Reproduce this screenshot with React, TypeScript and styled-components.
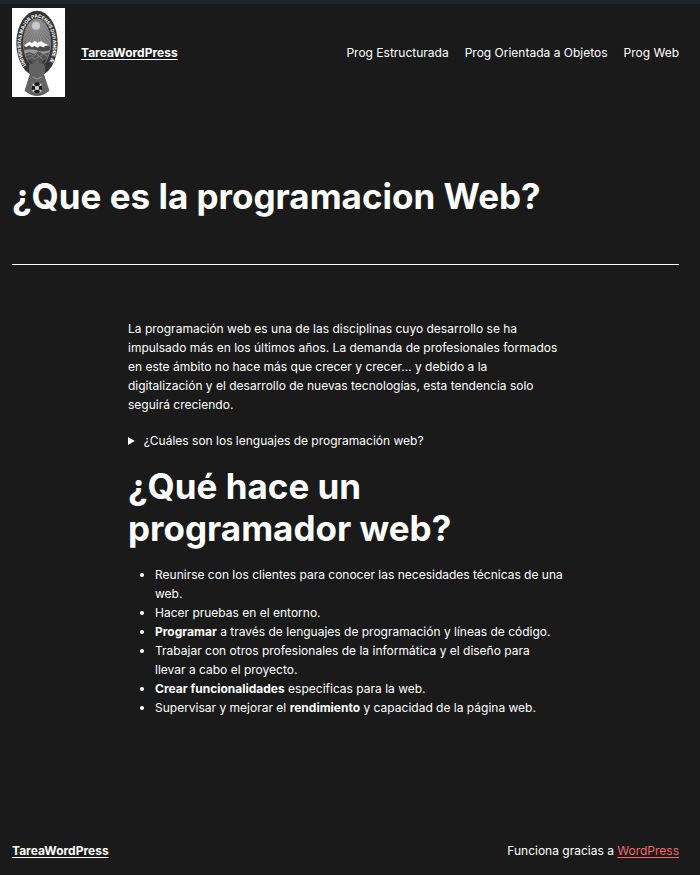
import React from "react";
import styled, { createGlobalStyle } from "styled-components";

const GlobalStyle = createGlobalStyle`
  *, *::before, *::after { box-sizing: border-box; }
  body {
    margin: 0;
    background: #1a1a1a;
    color: #fff;
    font: 400 12px/19px Inter, "Liberation Sans", sans-serif;
  }
`;

const Page = styled.div`
  border-top: 4px solid #1d252c;
  padding: 4px 21px 0 12px;
`;

const Header = styled.header`
  display: flex;
  align-items: center;
  justify-content: space-between;
  gap: 16px;
`;

const Brand = styled.div`
  display: flex;
  align-items: center;
  gap: 16px;
`;

const LogoLink = styled.a`
  display: block;
  line-height: 0;
`;

const SiteTitle = styled.a`
  color: #fff;
  font-weight: 700;
  text-underline-offset: 2px;
`;

const Nav = styled.nav`
  display: flex;
  gap: 16px;
`;

const NavLink = styled.a`
  color: #fff;
  text-decoration: none;
`;

const Title = styled.h1`
  margin: 78px 0 46px;
  font-size: 35px;
  line-height: 43px;
  font-weight: 700;
`;

const Rule = styled.hr`
  margin: 0;
  border: 0;
  border-top: 1px solid #fff;
`;

const Article = styled.article`
  max-width: 435px;
  margin: 54px auto 0;
`;

const Paragraph = styled.p`
  margin: 0 0 17px;
`;

const Details = styled.details`
  margin: 0 0 15px;
`;

const Summary = styled.summary`
  & > span { padding-left: 3px; }
`;

const Subtitle = styled.h2`
  margin: 0 0 16px;
  font-size: 35px;
  line-height: 42px;
  font-weight: 700;
`;

const List = styled.ul`
  margin: 0;
  padding: 0 0 0 27px;
`;

const Footer = styled.footer`
  display: flex;
  justify-content: space-between;
  gap: 16px;
  margin-top: 124px;
  padding-bottom: 14px;
`;

const Credit = styled.p`
  margin: 0;
`;

const CreditLink = styled.a`
  color: #f2666b;
  text-underline-offset: 2px;
`;

const rays = Array.from({ length: 36 }, (_, i) => {
  const a = (i * Math.PI) / 18;
  return `M72 53 L${(72 + 95 * Math.cos(a)).toFixed(1)} ${(53 + 95 * Math.sin(a)).toFixed(1)}`;
}).join(" ");

function Seal() {
  return (
    <svg width="53" height="89" viewBox="0 0 159 267" role="img" aria-label="TareaWordPress">
      <defs>
        <clipPath id="oval"><ellipse cx="75" cy="105" rx="41" ry="73" /></clipPath>
        <path id="ring" d="M43 172 A48 82 0 1 1 107 172" />
      </defs>
      <rect width="159" height="267" fill="#fff" />
      <path d="M54 200 L95 200 L111 248 Q75 278 39 248Z" fill="#646464" stroke="#4a4a4a" strokeWidth="2" />
      <ellipse cx="75" cy="106" rx="62" ry="98" fill="#353535" />
      <g clipPath="url(#oval)">
        <rect x="30" y="25" width="90" height="160" fill="#787878" />
        <path d={rays} stroke="#a9a9a9" strokeWidth="1.5" />
        <circle cx="72" cy="53" r="12" fill="#c8c8c8" />
        <path d="M30 121 L41 106 L52 101 L59 104 L67 98 L77 104 L87 99 L97 106 L106 109 L120 122 L120 138 L30 138Z" fill="#4b4b4b" />
        <path d="M36 113 L45 105 L53 101 L59 105 L68 98 L77 104 L87 99 L97 106 L112 112 L101 113 L94 118 L84 114 L77 119 L68 114 L60 118 L51 112 L43 117Z" fill="#fff" />
        <path d="M30 129 Q56 120 74 127 T120 126 L120 145 L30 145Z" fill="#989898" />
        <path d="M30 139 L53 132 L66 138 L80 130 L94 138 L120 130 L120 185 L30 185Z" fill="#555" />
        <path d="M40 145 L55 138 L64 145 L73 137 L83 146 L94 138 L108 145 M46 154 L60 147 L69 154 L82 145 L93 155" fill="none" stroke="#969696" strokeWidth="2" />
        <path d="M36 157 Q57 148 63 169 L75 178 L90 164 Q94 150 114 156 L114 188 L36 188Z" fill="#393939" />
      </g>
      <ellipse cx="75" cy="105" rx="41" ry="73" fill="none" stroke="#999" strokeWidth="1.5" />
      <path d="M52 172 Q60 164 68 166 L76 156 L83 166 Q94 164 99 176 Q102 190 92 205 L58 205 Q48 188 52 172Z" fill="#626262" />
      <text fill="#fff" fontFamily="Inter, sans-serif" fontSize="14" fontWeight="700">
        <textPath href="#ring">UNIVERSITAS MAJOR PACENSIS DIVI ANDRE Æ</textPath>
      </text>
      <path d="M62 207 L75 213 L90 207" fill="none" stroke="#999" strokeWidth="3" />
      <circle cx="75" cy="239" r="17" fill="#8b8b8b" />
      <path d="M70 223 L80 223 L84 230 L75 236 L66 230Z M60 233 L66 232 L71 240 L66 247 L59 245Z M90 233 L84 232 L79 240 L84 247 L91 245Z M70 256 L80 256 L84 249 L75 243 L66 249Z" fill="#171717" />
      <circle cx="75" cy="240" r="6" fill="#d8d8d8" />
      <path d="M62 229 L67 233 M88 229 L83 233 M62 250 L67 246 M88 250 L83 246" stroke="#e5e5e5" strokeWidth="4" />
    </svg>
  );
}

export default function App() {
  return (
    <>
      <GlobalStyle />
      <Page>
        <Header>
          <Brand>
            <LogoLink href="#"><Seal /></LogoLink>
            <SiteTitle href="#">TareaWordPress</SiteTitle>
          </Brand>
          <Nav>
            <NavLink href="#">Prog Estructurada</NavLink>
            <NavLink href="#">Prog Orientada a Objetos</NavLink>
            <NavLink href="#">Prog Web</NavLink>
          </Nav>
        </Header>
        <main>
          <Title>¿Que es la programacion Web?</Title>
          <Rule />
          <Article>
            <Paragraph>
              La programación web es una de las disciplinas cuyo desarrollo se ha impulsado más en los
              últimos años. La demanda de profesionales formados en este ámbito no hace más que crecer y
              crecer… y debido a la digitalización y el desarrollo de nuevas tecnologías, esta tendencia
              solo seguirá creciendo.
            </Paragraph>
            <Details>
              <Summary><span>¿Cuáles son los lenguajes de programación web?</span></Summary>
            </Details>
            <Subtitle>¿Qué hace un programador web?</Subtitle>
            <List>
              <li>Reunirse con los clientes para conocer las necesidades técnicas de una web.</li>
              <li>Hacer pruebas en el entorno.</li>
              <li><strong>Programar</strong> a través de lenguajes de programación y líneas de código.</li>
              <li>Trabajar con otros profesionales de la informática y el diseño para llevar a cabo el proyecto.</li>
              <li><strong>Crear funcionalidades</strong> especificas para la web.</li>
              <li>Supervisar y mejorar el <strong>rendimiento</strong> y capacidad de la página web.</li>
            </List>
          </Article>
        </main>
        <Footer>
          <SiteTitle href="#">TareaWordPress</SiteTitle>
          <Credit>Funciona gracias a <CreditLink href="#">WordPress</CreditLink></Credit>
        </Footer>
      </Page>
    </>
  );
}
